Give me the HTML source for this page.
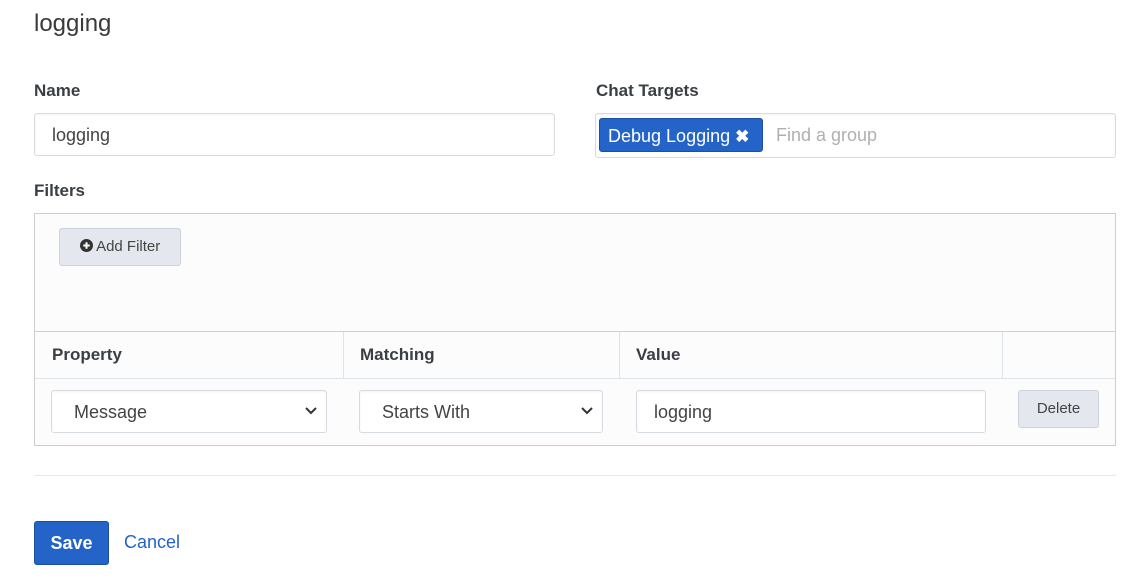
<!DOCTYPE html>
<html><head><style>
*{box-sizing:border-box;margin:0;padding:0}
body{width:1144px;height:586px;background:#fff;font-family:"Liberation Sans",sans-serif;color:#333;position:relative;overflow:hidden}
.a{position:absolute}
.lbl{font-weight:bold;font-size:17px;color:#3a3f44}
.inp{border:1px solid #d6dbe1;border-radius:3px;background:#fff;box-shadow:inset 0 1px 2px rgba(0,0,0,.05);font-size:18px;color:#444}
.btn{background:#e4e8ee;border:1px solid #ccd2da;border-radius:3px;font-size:15px;color:#444;text-align:center}
</style></head><body>
<div class="a" style="left:34px;top:10px;font-size:24px;color:#3a3a3a">logging</div>
<div class="a lbl" style="left:34px;top:81px">Name</div>
<div class="a lbl" style="left:596px;top:81px">Chat Targets</div>
<div class="a inp" style="left:34px;top:113px;width:521px;height:43px;padding:11px 17px">logging</div>
<div class="a inp" style="left:595px;top:113px;width:521px;height:45px"></div>
<div class="a" style="left:599px;top:118px;width:164px;height:34px;background:#2463c8;border-radius:3px;color:#fff;font-size:18px;padding:7px 0 0 8px;border:1px solid #1b4fa3">Debug Logging <span style="font-size:17px;font-weight:bold">✖</span></div>
<div class="a" style="left:776px;top:125px;font-size:18px;color:#b0b0b0">Find a group</div>
<div class="a lbl" style="left:34px;top:181px">Filters</div>
<div class="a" style="left:34px;top:213px;width:1082px;height:233px;border:1px solid #cdcdcd;background:#fcfcfd"></div>
<div class="a btn" style="left:59px;top:228px;width:122px;height:38px;padding-top:9px"><svg width="13" height="13" viewBox="0 0 14 14" style="vertical-align:-1px"><circle cx="7" cy="7" r="7" fill="#333"/><path d="M7 3.5v7M3.5 7h7" stroke="#fff" stroke-width="2.2"/></svg> Add Filter</div>
<div class="a" style="left:35px;top:331px;width:1080px;height:1px;background:#d0d0d0"></div>
<div class="a" style="left:35px;top:378px;width:1080px;height:1px;background:#dde3ea"></div>
<div class="a" style="left:343px;top:332px;width:1px;height:46px;background:#dde3ea"></div>
<div class="a" style="left:619px;top:332px;width:1px;height:46px;background:#dde3ea"></div>
<div class="a" style="left:1002px;top:332px;width:1px;height:46px;background:#dde3ea"></div>
<div class="a lbl" style="left:52px;top:345px">Property</div>
<div class="a lbl" style="left:360px;top:345px">Matching</div>
<div class="a lbl" style="left:636px;top:345px">Value</div>
<div class="a inp" style="left:51px;top:390px;width:276px;height:43px;padding:11px 22px">Message</div>
<div class="a inp" style="left:359px;top:390px;width:244px;height:43px;padding:11px 22px">Starts With</div>
<svg class="a" style="left:305px;top:407px" width="12" height="8"><path d="M1 1l5 5 5-5" stroke="#333" stroke-width="2" fill="none"/></svg>
<svg class="a" style="left:581px;top:407px" width="12" height="8"><path d="M1 1l5 5 5-5" stroke="#333" stroke-width="2" fill="none"/></svg>
<div class="a inp" style="left:636px;top:390px;width:350px;height:43px;padding:11px 17px">logging</div>
<div class="a btn" style="left:1018px;top:390px;width:81px;height:38px;padding-top:9px">Delete</div>
<div class="a" style="left:34px;top:475px;width:1082px;height:1px;background:#e8e8e8"></div>
<div class="a" style="left:34px;top:521px;width:75px;height:44px;background:#2463c8;border:1px solid #1b4fa3;border-radius:3px;color:#fff;font-size:18px;font-weight:bold;text-align:center;padding-top:11px">Save</div>
<div class="a" style="left:124px;top:532px;font-size:18px;color:#2463c8">Cancel</div>
</body></html>
